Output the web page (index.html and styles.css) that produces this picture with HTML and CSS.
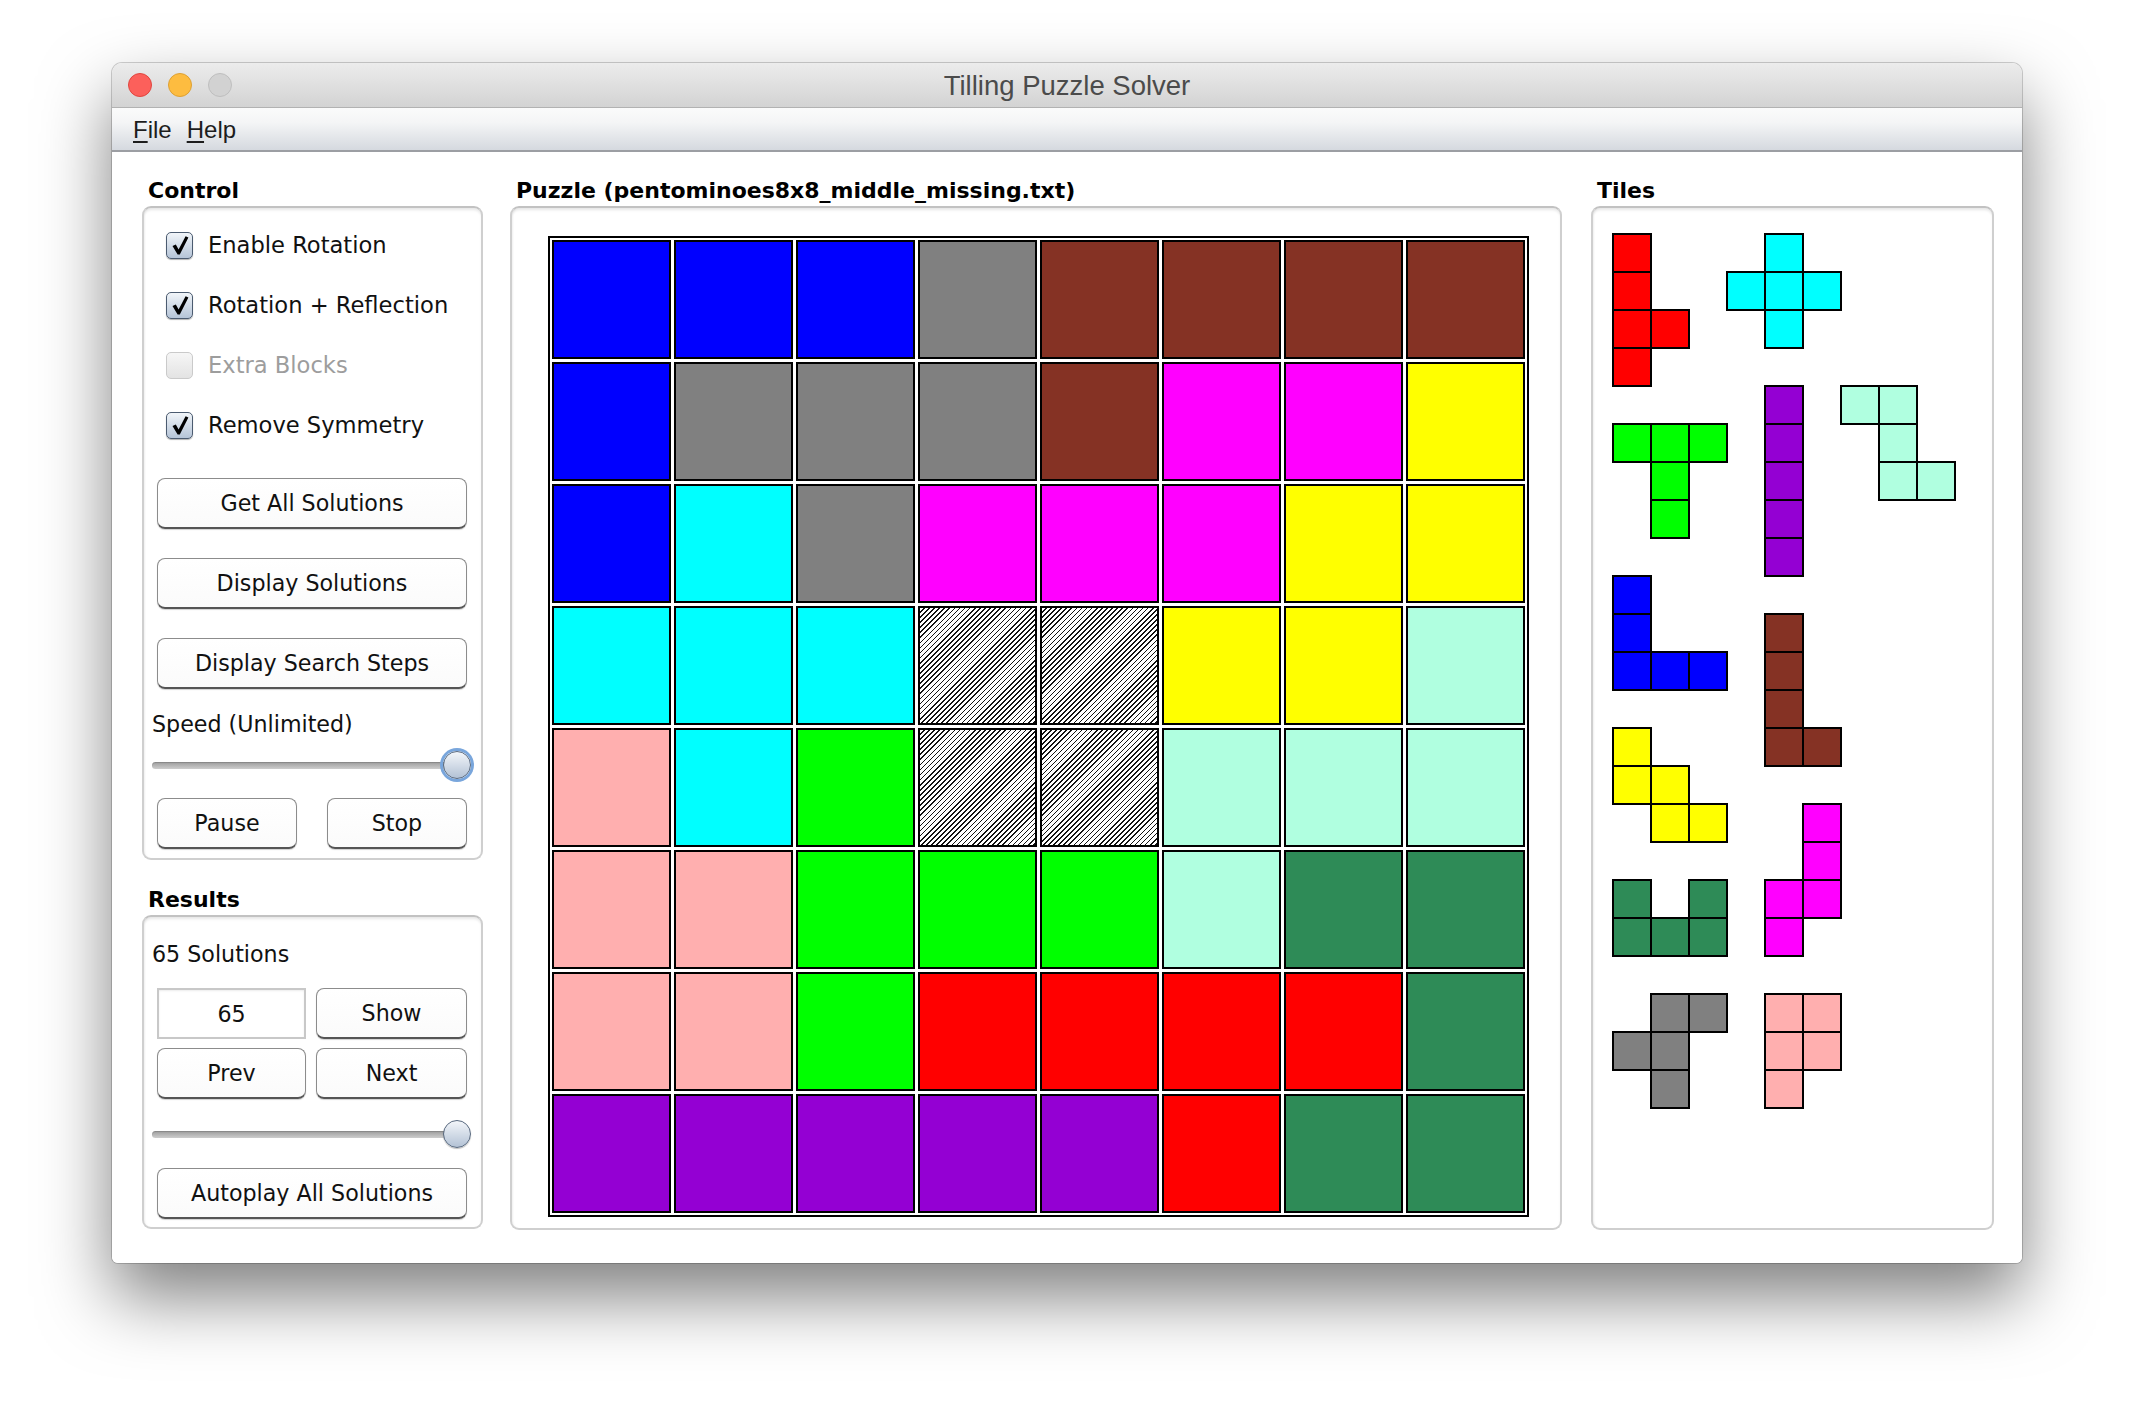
FILE: index.html
```html
<!DOCTYPE html>
<html>
<head>
<meta charset="utf-8">
<title>Tilling Puzzle Solver</title>
<link rel="stylesheet" href="styles.css">
</head>
<body>
<div class="window">
  <div class="titlebar">
    <div class="lights">
      <span class="light red"></span>
      <span class="light yellow"></span>
      <span class="light gray"></span>
    </div>
    <div class="title">Tilling Puzzle Solver</div>
    <div></div>
  </div>
  <div class="menubar">
    <span class="menu"><u>F</u>ile</span>
    <span class="menu"><u>H</u>elp</span>
  </div>
  <div class="content">
    <div class="col-left">
      <div class="group-label">Control</div>
      <div class="panel control">
        <div class="check"><span class="cb"><svg width="20" height="21" viewBox="0 0 20 21"><path d="M2.5 11 L5.8 9.6 L8.6 14.6 L15.6 1.2 L18.4 2.4 L9.8 19.6 L7.6 19.6 Z" fill="#000"/></svg></span>Enable Rotation</div>
        <div class="check"><span class="cb"><svg width="20" height="21" viewBox="0 0 20 21"><path d="M2.5 11 L5.8 9.6 L8.6 14.6 L15.6 1.2 L18.4 2.4 L9.8 19.6 L7.6 19.6 Z" fill="#000"/></svg></span>Rotation + Reflection</div>
        <div class="check disabled"><span class="cb"></span>Extra Blocks</div>
        <div class="check"><span class="cb"><svg width="20" height="21" viewBox="0 0 20 21"><path d="M2.5 11 L5.8 9.6 L8.6 14.6 L15.6 1.2 L18.4 2.4 L9.8 19.6 L7.6 19.6 Z" fill="#000"/></svg></span>Remove Symmetry</div>
        <div class="btn first">Get All Solutions</div>
        <div class="btn">Display Solutions</div>
        <div class="btn">Display Search Steps</div>
        <div class="caption speed">Speed (Unlimited)</div>
        <div class="slider focus"><div class="track"></div><div class="knob"></div></div>
        <div class="btn-row pause-row">
          <div class="btn">Pause</div>
          <div class="btn">Stop</div>
        </div>
      </div>
      <div class="group-label results-label">Results</div>
      <div class="panel results">
        <div class="caption count">65 Solutions</div>
        <div class="pair first-pair">
          <div class="field">65</div>
          <div class="btn">Show</div>
        </div>
        <div class="pair">
          <div class="btn">Prev</div>
          <div class="btn">Next</div>
        </div>
        <div class="slider results-slider"><div class="track"></div><div class="knob"></div></div>
        <div class="btn autoplay">Autoplay All Solutions</div>
      </div>
    </div>

    <div class="col-mid">
      <div class="group-label">Puzzle (pentominoes8x8_middle_missing.txt)</div>
      <div class="panel puzzle">
        <div class="board">
          <div class="cell b"></div><div class="cell b"></div><div class="cell b"></div><div class="cell g"></div><div class="cell br"></div><div class="cell br"></div><div class="cell br"></div><div class="cell br"></div>
          <div class="cell b"></div><div class="cell g"></div><div class="cell g"></div><div class="cell g"></div><div class="cell br"></div><div class="cell m"></div><div class="cell m"></div><div class="cell y"></div>
          <div class="cell b"></div><div class="cell c"></div><div class="cell g"></div><div class="cell m"></div><div class="cell m"></div><div class="cell m"></div><div class="cell y"></div><div class="cell y"></div>
          <div class="cell c"></div><div class="cell c"></div><div class="cell c"></div><div class="cell h"></div><div class="cell h"></div><div class="cell y"></div><div class="cell y"></div><div class="cell a"></div>
          <div class="cell p"></div><div class="cell c"></div><div class="cell gr"></div><div class="cell h"></div><div class="cell h"></div><div class="cell a"></div><div class="cell a"></div><div class="cell a"></div>
          <div class="cell p"></div><div class="cell p"></div><div class="cell gr"></div><div class="cell gr"></div><div class="cell gr"></div><div class="cell a"></div><div class="cell dg"></div><div class="cell dg"></div>
          <div class="cell p"></div><div class="cell p"></div><div class="cell gr"></div><div class="cell r"></div><div class="cell r"></div><div class="cell r"></div><div class="cell r"></div><div class="cell dg"></div>
          <div class="cell pu"></div><div class="cell pu"></div><div class="cell pu"></div><div class="cell pu"></div><div class="cell pu"></div><div class="cell r"></div><div class="cell dg"></div><div class="cell dg"></div>
        </div>
      </div>
    </div>

    <div class="col-right">
      <div class="group-label">Tiles</div>
      <div class="panel tiles">
        <svg class="tileset" width="344" height="876" viewBox="0 0 344 876">
          <g stroke="#000" stroke-width="2">
            <g fill="#ff0000">
              <rect x="1" y="1" width="38" height="38"/><rect x="1" y="39" width="38" height="38"/><rect x="1" y="77" width="38" height="38"/><rect x="39" y="77" width="38" height="38"/><rect x="1" y="115" width="38" height="38"/>
            </g>
            <g fill="#00ffff">
              <rect x="153" y="1" width="38" height="38"/><rect x="115" y="39" width="38" height="38"/><rect x="153" y="39" width="38" height="38"/><rect x="191" y="39" width="38" height="38"/><rect x="153" y="77" width="38" height="38"/>
            </g>
            <g fill="#00ff00">
              <rect x="1" y="191" width="38" height="38"/><rect x="39" y="191" width="38" height="38"/><rect x="77" y="191" width="38" height="38"/><rect x="39" y="229" width="38" height="38"/><rect x="39" y="267" width="38" height="38"/>
            </g>
            <g fill="#9400d3">
              <rect x="153" y="153" width="38" height="38"/><rect x="153" y="191" width="38" height="38"/><rect x="153" y="229" width="38" height="38"/><rect x="153" y="267" width="38" height="38"/><rect x="153" y="305" width="38" height="38"/>
            </g>
            <g fill="#b0ffe0">
              <rect x="229" y="153" width="38" height="38"/><rect x="267" y="153" width="38" height="38"/><rect x="267" y="191" width="38" height="38"/><rect x="267" y="229" width="38" height="38"/><rect x="305" y="229" width="38" height="38"/>
            </g>
            <g fill="#0000ff">
              <rect x="1" y="343" width="38" height="38"/><rect x="1" y="381" width="38" height="38"/><rect x="1" y="419" width="38" height="38"/><rect x="39" y="419" width="38" height="38"/><rect x="77" y="419" width="38" height="38"/>
            </g>
            <g fill="#853224">
              <rect x="153" y="381" width="38" height="38"/><rect x="153" y="419" width="38" height="38"/><rect x="153" y="457" width="38" height="38"/><rect x="153" y="495" width="38" height="38"/><rect x="191" y="495" width="38" height="38"/>
            </g>
            <g fill="#ffff00">
              <rect x="1" y="495" width="38" height="38"/><rect x="1" y="533" width="38" height="38"/><rect x="39" y="533" width="38" height="38"/><rect x="39" y="571" width="38" height="38"/><rect x="77" y="571" width="38" height="38"/>
            </g>
            <g fill="#ff00ff">
              <rect x="191" y="571" width="38" height="38"/><rect x="191" y="609" width="38" height="38"/><rect x="153" y="647" width="38" height="38"/><rect x="191" y="647" width="38" height="38"/><rect x="153" y="685" width="38" height="38"/>
            </g>
            <g fill="#2e8b57">
              <rect x="1" y="647" width="38" height="38"/><rect x="77" y="647" width="38" height="38"/><rect x="1" y="685" width="38" height="38"/><rect x="39" y="685" width="38" height="38"/><rect x="77" y="685" width="38" height="38"/>
            </g>
            <g fill="#808080">
              <rect x="39" y="761" width="38" height="38"/><rect x="77" y="761" width="38" height="38"/><rect x="1" y="799" width="38" height="38"/><rect x="39" y="799" width="38" height="38"/><rect x="39" y="837" width="38" height="38"/>
            </g>
            <g fill="#ffafaf">
              <rect x="153" y="761" width="38" height="38"/><rect x="191" y="761" width="38" height="38"/><rect x="153" y="799" width="38" height="38"/><rect x="191" y="799" width="38" height="38"/><rect x="153" y="837" width="38" height="38"/>
            </g>
          </g>
        </svg>
      </div>
    </div>
  </div>
</div>
</body>
</html>
```

FILE: styles.css
```css
* { box-sizing: border-box; }

html, body { height: 100%; }

body {
  margin: 0;
  min-height: 1424px;
  background: #ffffff;
  font-family: "DejaVu Sans", "Noto Sans", sans-serif;
  color: #111;
  overflow: hidden;
}

.window {
  margin: 63px 0 0 112px;
  width: 1910px;
  height: 1200px;
  border-radius: 10px 10px 6px 6px;
  background: #fff;
  box-shadow: 0 34px 70px rgba(0,0,0,0.5), 0 0 0 1px rgba(0,0,0,0.18);
  overflow: hidden;
  display: flex;
  flex-direction: column;
}

/* title bar */
.titlebar {
  height: 45px;
  display: grid;
  grid-template-columns: 1fr auto 1fr;
  align-items: center;
  background: linear-gradient(#ececec, #d3d3d3);
  border-bottom: 1px solid #b2b2b2;
}
.lights { display: flex; gap: 16px; padding-left: 16px; }
.light { width: 24px; height: 24px; border-radius: 50%; display: block; }
.red { background: #fc605b; border: 1px solid #df463f; }
.yellow { background: #fdbc40; border: 1px solid #dda033; }
.gray { background: #d2d2d2; border: 1px solid #bebebe; }
.title {
  font-family: "Liberation Sans", Arial, sans-serif;
  font-size: 27.5px;
  color: #4b4b4b;
  padding-top: 2px;
}

/* menu bar */
.menubar {
  height: 44px;
  display: flex;
  align-items: center;
  padding-left: 21px;
  gap: 15px;
  background: linear-gradient(#fbfbfb 0%, #f4f5f6 35%, #d5d9df 100%);
  border-bottom: 2px solid #9c9ea3;
  font-family: "Liberation Sans", Arial, sans-serif;
  font-size: 24px;
  color: #1d1d1d;
}
.menu { padding-top: 2px; }
.menu u { text-decoration-thickness: 2px; text-underline-offset: 3px; }

/* content */
.content {
  flex: 1;
  display: flex;
  padding: 24px 28px 0 30px;
  background: #fff;
}
.col-left { width: 341px; display: flex; flex-direction: column; }
.col-mid { width: 1052px; margin-left: 27px; }
.col-right { width: 403px; margin-left: 29px; }

.group-label {
  height: 30px;
  line-height: 30px;
  padding-left: 6px;
  font-size: 22px;
  font-weight: bold;
  color: #000;
  white-space: nowrap;
}
.results-label { margin-top: 25px; }

.panel {
  border: 2px solid #cfcfcf;
  border-top-color: #c2c2c2;
  border-radius: 9px;
  background: #fff;
  box-shadow: inset 0 3px 3px -1px rgba(0,0,0,0.10), inset 2px 0 2px -1px rgba(0,0,0,0.05);
}

/* control panel */
.control { height: 654px; padding-top: 7px; display: flex; flex-direction: column; }

.check {
  height: 60px;
  display: flex;
  align-items: center;
  gap: 15px;
  padding-left: 22px;
  font-size: 22.6px;
  color: #111;
}
.cb {
  width: 27px;
  height: 27px;
  border-radius: 5px;
  border: 1.5px solid #4b5b70;
  background: linear-gradient(#f1f5f9, #b5c4d7);
  box-shadow: 0 1px 1px rgba(0,0,0,0.3);
  display: flex;
  align-items: center;
  justify-content: center;
  flex: none;
}
.disabled { color: #9d9d9d; }
.disabled .cb {
  border-color: #cacaca;
  background: linear-gradient(#f6f6f6, #e3e3e3);
  box-shadow: none;
}

.btn {
  height: 51px;
  margin: 0 14px 0 13px;
  border: 1.5px solid #8c8c8c;
  border-bottom: 2px solid #555;
  border-radius: 8px;
  background: linear-gradient(#ffffff, #fbfbfb);
  box-shadow: 0 1px 1px rgba(0,0,0,0.18);
  display: flex;
  align-items: center;
  justify-content: center;
  font-size: 22.2px;
  color: #111;
}
.control .btn { margin-top: 29px; }
.control .btn.first { margin-top: 23px; }

.caption {
  height: 30px;
  line-height: 30px;
  margin-left: 8px;
  font-size: 22.2px;
  color: #111;
}
.speed { margin-top: 20px; }

.slider {
  position: relative;
  width: 318px;
  height: 30px;
  margin-left: 8px;
  margin-top: 11px;
}
.track {
  position: absolute;
  left: 0;
  right: 10px;
  top: 12px;
  height: 7px;
  border-radius: 4px;
  background: linear-gradient(#9c9c9c, #cdcdcd);
  box-shadow: inset 0 1px 1px rgba(0,0,0,0.15);
}
.knob {
  position: absolute;
  left: 291px;
  top: 1px;
  width: 28px;
  height: 28px;
  border-radius: 50%;
  border: 1.5px solid #58697f;
  background: linear-gradient(#f3f6fa, #b3c2d5);
  box-shadow: 0 1px 1px rgba(0,0,0,0.25);
}
.focus .knob { box-shadow: 0 0 0 3px #79a6dc; }

.btn-row {
  display: grid;
  grid-template-columns: 140px 140px;
  gap: 30px;
  margin: 18px 14px 0 13px;
}
.btn-row .btn, .pair .btn { margin: 0; }
.control .btn-row .btn { margin-top: 0; }

/* results panel */
.results { height: 314px; display: flex; flex-direction: column; }
.count { margin-top: 22px; }
.pair {
  display: grid;
  grid-template-columns: 149px 151px;
  gap: 10px;
  margin: 9px 14px 0 13px;
}
.pair .field, .pair .btn { height: 51px; }
.first-pair { margin-top: 19px; }
.field {
  height: 50px;
  border: 2px solid #c8c8c8;
  box-shadow: inset 0 1px 2px rgba(0,0,0,0.08);
  display: flex;
  align-items: center;
  justify-content: center;
  font-size: 22.2px;
  color: #111;
}
.results-slider { margin-top: 20px; }
.autoplay { margin-top: 19px; }

/* puzzle board */
.puzzle { height: 1024px; padding: 28px 0 0 36px; }
.board {
  display: grid;
  grid-template-columns: repeat(8, 119px);
  grid-auto-rows: 119px;
  gap: 3px;
  padding: 2px;
  width: max-content;
  border: 2px solid #000;
  background: #fff;
}
.cell { border: 2px solid #000; }
.b { background: #0000ff; }
.g { background: #808080; }
.br { background: #853224; }
.m { background: #ff00ff; }
.y { background: #ffff00; }
.c { background: #00ffff; }
.a { background: #b0ffe0; }
.p { background: #ffafaf; }
.gr { background: #00ff00; }
.dg { background: #2e8b57; }
.r { background: #ff0000; }
.pu { background: #9400d3; }
.h { background: repeating-linear-gradient(135deg, #ffffff 0 2.5px, #111111 2.5px 3.6px); }

/* tiles */
.tiles { height: 1024px; padding: 25px 0 0 19px; }
.tileset { display: block; }
```
